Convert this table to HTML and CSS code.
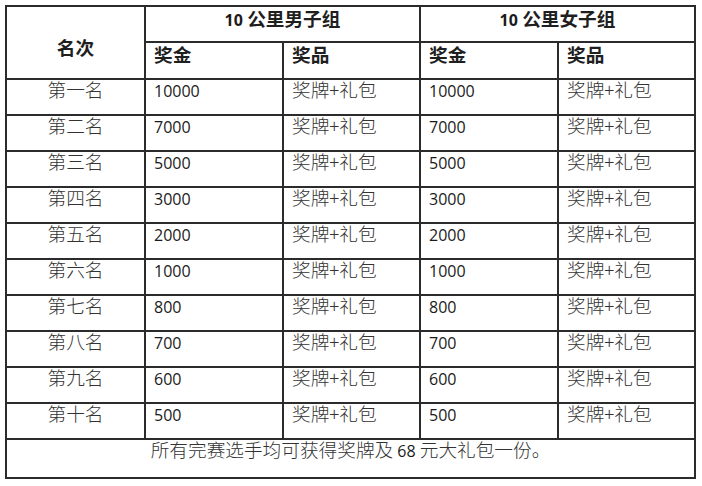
FILE: index.html
```html
<!DOCTYPE html>
<html lang="zh-CN">
<head>
<meta charset="utf-8">
<title>奖金设置</title>
<link rel="stylesheet" href="styles.css">
</head>
<body>
<table class="prize">
  <colgroup>
    <col class="c-rank">
    <col class="c-money">
    <col class="c-gift">
    <col class="c-money">
    <col class="c-gift">
  </colgroup>
  <thead>
    <tr class="row-h1">
      <th rowspan="2" class="rank-head">名次</th>
      <th colspan="2" class="group"><span class="num">10</span> 公里男子组</th>
      <th colspan="2" class="group"><span class="num">10</span> 公里女子组</th>
    </tr>
    <tr class="row-h2">
      <th class="sub">奖金</th>
      <th class="sub">奖品</th>
      <th class="sub">奖金</th>
      <th class="sub">奖品</th>
    </tr>
  </thead>
  <tbody>
    <tr><td class="rank">第一名</td><td><span class="num">10000</span></td><td>奖牌+礼包</td><td><span class="num">10000</span></td><td>奖牌+礼包</td></tr>
    <tr><td class="rank">第二名</td><td><span class="num">7000</span></td><td>奖牌+礼包</td><td><span class="num">7000</span></td><td>奖牌+礼包</td></tr>
    <tr><td class="rank">第三名</td><td><span class="num">5000</span></td><td>奖牌+礼包</td><td><span class="num">5000</span></td><td>奖牌+礼包</td></tr>
    <tr><td class="rank">第四名</td><td><span class="num">3000</span></td><td>奖牌+礼包</td><td><span class="num">3000</span></td><td>奖牌+礼包</td></tr>
    <tr><td class="rank">第五名</td><td><span class="num">2000</span></td><td>奖牌+礼包</td><td><span class="num">2000</span></td><td>奖牌+礼包</td></tr>
    <tr><td class="rank">第六名</td><td><span class="num">1000</span></td><td>奖牌+礼包</td><td><span class="num">1000</span></td><td>奖牌+礼包</td></tr>
    <tr><td class="rank">第七名</td><td><span class="num">800</span></td><td>奖牌+礼包</td><td><span class="num">800</span></td><td>奖牌+礼包</td></tr>
    <tr><td class="rank">第八名</td><td><span class="num">700</span></td><td>奖牌+礼包</td><td><span class="num">700</span></td><td>奖牌+礼包</td></tr>
    <tr><td class="rank">第九名</td><td><span class="num">600</span></td><td>奖牌+礼包</td><td><span class="num">600</span></td><td>奖牌+礼包</td></tr>
    <tr><td class="rank">第十名</td><td><span class="num">500</span></td><td>奖牌+礼包</td><td><span class="num">500</span></td><td>奖牌+礼包</td></tr>
  </tbody>
  <tfoot>
    <tr><td colspan="5" class="note">所有完赛选手均可获得奖牌及 <span class="num">68</span> 元大礼包一份。</td></tr>
  </tfoot>
</table>
</body>
</html>
```

FILE: styles.css
```css
html, body {
  margin: 0;
  padding: 0;
  background: #ffffff;
}

body {
  padding: 5px 0 0 5px;
}

.prize {
  border-collapse: collapse;
  table-layout: fixed;
  width: 691px;
  font-family: "Noto Sans CJK SC", "Noto Sans", sans-serif;
  font-size: 18.67px;
  line-height: 18px;
  color: #333333;
  font-weight: 300;
}

.c-rank { width: 139px; }
.c-money { width: 138px; }
.c-gift { width: 137px; }

.prize th,
.prize td {
  border: 2px solid #2b2b2b;
  padding: 0 8px;
  height: 36px;
  box-sizing: border-box;
  vertical-align: top;
  text-align: left;
  white-space: nowrap;
}

.prize th {
  font-weight: 700;
  color: #1f1f1f;
  line-height: 20px;
}

.prize th.group {
  text-align: center;
  padding-top: 1px;
}

.prize th.rank-head {
  text-align: center;
  padding-top: 30px;
}

.prize th.sub {
  padding-top: 1px;
  height: 37px;
}

.prize td.rank {
  text-align: center;
}

.prize td.note {
  text-align: center;
  height: 39px;
}

.num {
  font-family: "Open Sans", "Liberation Sans", sans-serif;
  font-size: 16px;
  color: #1a1a1a;
  font-weight: 400;
}

th .num {
  font-weight: 700;
}
```
